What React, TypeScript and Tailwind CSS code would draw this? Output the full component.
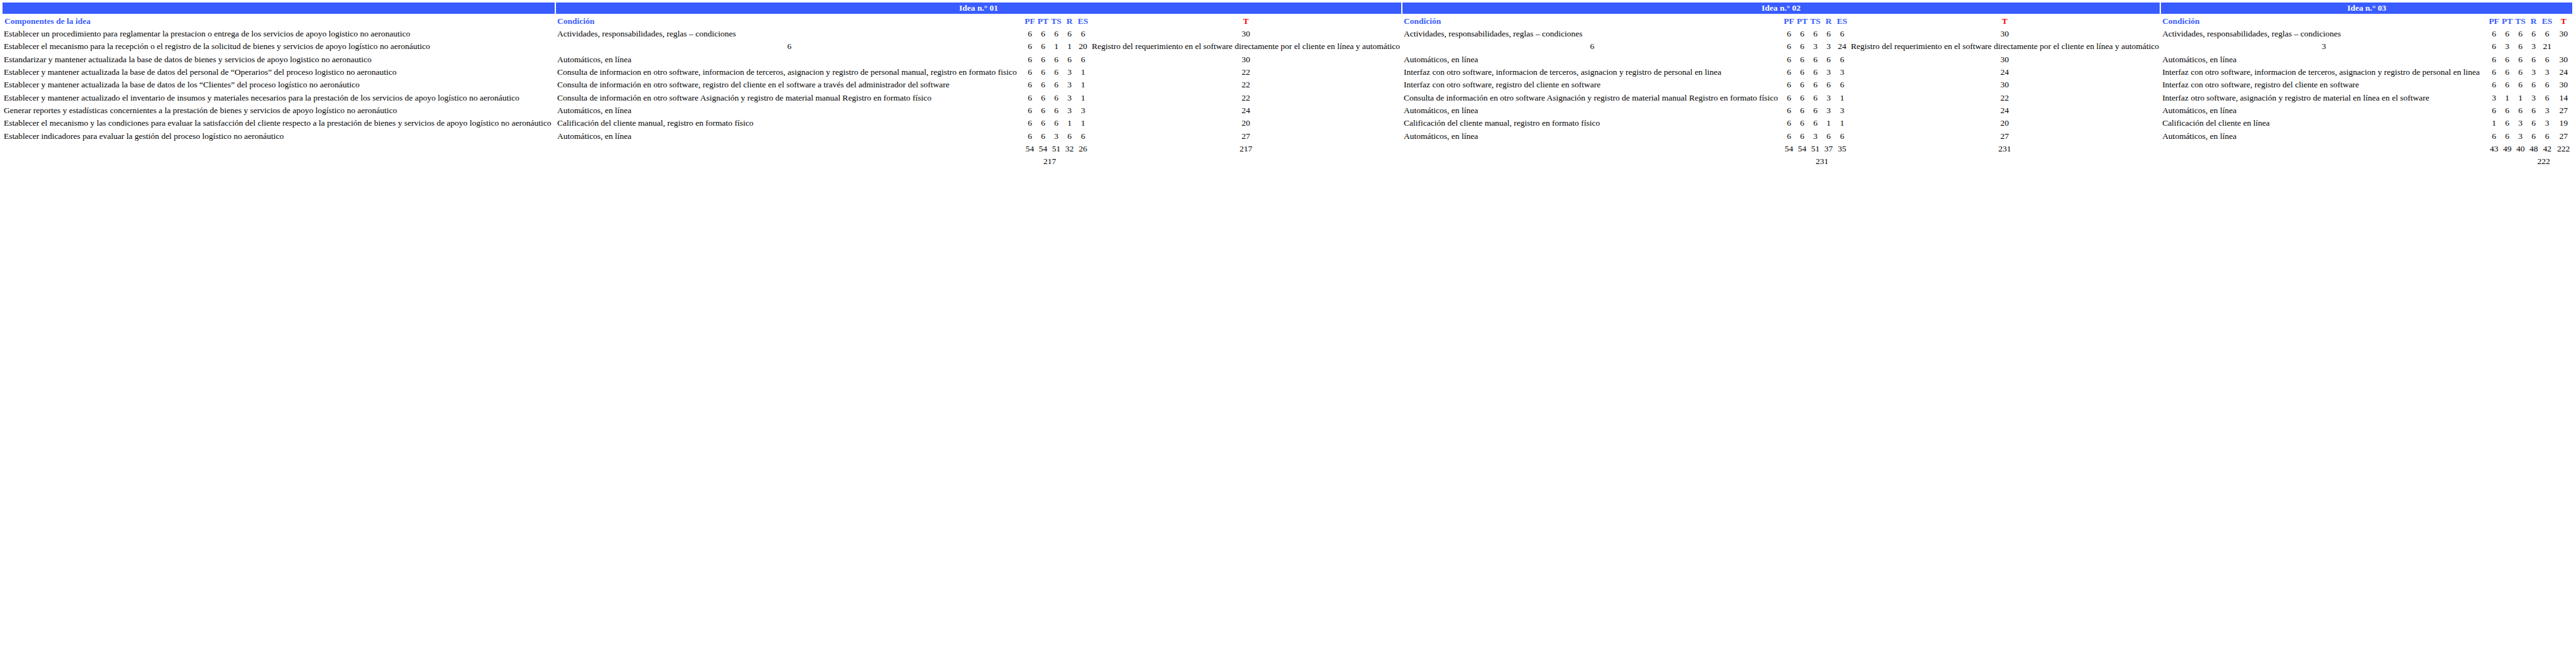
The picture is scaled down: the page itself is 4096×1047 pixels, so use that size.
import React from "react";

type IdeaRow = {
  cond: string;
  nums: string[];
  t: string;
  condCenter?: boolean;
  tText?: boolean;
};

type Idea = {
  title: string;
  rows: IdeaRow[];
  totals: string[];
  total: string;
  grand: string;
  grandStart: number;
};

const components = [
  "Establecer un procedimiento para reglamentar la prestacion o entrega de los servicios de apoyo logistico no aeronautico",
  "Establecer el mecanismo para la recepción o el registro de la solicitud de bienes y servicios de apoyo logístico no aeronáutico",
  "Estandarizar y mantener actualizada la base de datos de bienes y servicios de apoyo logistico no aeronautico",
  "Establecer y mantener actualizada la base de datos del personal de “Operarios” del proceso logistico no aeronautico",
  "Establecer y mantener actualizada la base de datos de los “Clientes” del proceso logístico no aeronáutico",
  "Establecer y mantener actualizado el inventario de insumos y materiales necesarios para la prestación de los servicios de apoyo logístico no aeronáutico",
  "Generar reportes y estadísticas concernientes a la prestación de bienes y servicios de apoyo logístico no aeronáutico",
  "Establecer el mecanismo y las condiciones para evaluar la satisfacción del cliente respecto a la prestación de bienes y servicios de apoyo logístico no aeronáutico",
  "Establecer indicadores para evaluar la gestión del proceso logístico no aeronáutico",
];

const REG =
  "Registro del requerimiento en el software directamente por el cliente en línea y automático";

const ideas: Idea[] = [
  {
    title: "Idea n.° 01",
    rows: [
      { cond: "Actividades, responsabilidades, reglas – condiciones", nums: ["6", "6", "6", "6", "6"], t: "30" },
      { cond: "6", nums: ["6", "6", "1", "1", "20"], t: REG, condCenter: true, tText: true },
      { cond: "Automáticos, en línea", nums: ["6", "6", "6", "6", "6"], t: "30" },
      {
        cond: "Consulta de informacion en otro software, informacion de terceros, asignacion y registro de personal manual, registro en formato fisico",
        nums: ["6", "6", "6", "3", "1"],
        t: "22",
      },
      {
        cond: "Consulta de información en otro software, registro del cliente en el software a través del administrador del software",
        nums: ["6", "6", "6", "3", "1"],
        t: "22",
      },
      {
        cond: "Consulta de información en otro software Asignación y registro de material manual Registro en formato físico",
        nums: ["6", "6", "6", "3", "1"],
        t: "22",
      },
      { cond: "Automáticos, en línea", nums: ["6", "6", "6", "3", "3"], t: "24" },
      { cond: "Calificación del cliente manual, registro en formato físico", nums: ["6", "6", "6", "1", "1"], t: "20" },
      { cond: "Automáticos, en línea", nums: ["6", "6", "3", "6", "6"], t: "27" },
    ],
    totals: ["54", "54", "51", "32", "26"],
    total: "217",
    grand: "217",
    grandStart: 1,
  },
  {
    title: "Idea n.° 02",
    rows: [
      { cond: "Actividades, responsabilidades, reglas – condiciones", nums: ["6", "6", "6", "6", "6"], t: "30" },
      { cond: "6", nums: ["6", "6", "3", "3", "24"], t: REG, condCenter: true, tText: true },
      { cond: "Automáticos, en línea", nums: ["6", "6", "6", "6", "6"], t: "30" },
      {
        cond: "Interfaz con otro software, informacion de terceros, asignacion y registro de personal en linea",
        nums: ["6", "6", "6", "3", "3"],
        t: "24",
      },
      { cond: "Interfaz con otro software, registro del cliente en software", nums: ["6", "6", "6", "6", "6"], t: "30" },
      {
        cond: "Consulta de información en otro software Asignación y registro de material manual Registro en formato físico",
        nums: ["6", "6", "6", "3", "1"],
        t: "22",
      },
      { cond: "Automáticos, en línea", nums: ["6", "6", "6", "3", "3"], t: "24" },
      { cond: "Calificación del cliente manual, registro en formato físico", nums: ["6", "6", "6", "1", "1"], t: "20" },
      { cond: "Automáticos, en línea", nums: ["6", "6", "3", "6", "6"], t: "27" },
    ],
    totals: ["54", "54", "51", "37", "35"],
    total: "231",
    grand: "231",
    grandStart: 2,
  },
  {
    title: "Idea n.° 03",
    rows: [
      { cond: "Actividades, responsabilidades, reglas – condiciones", nums: ["6", "6", "6", "6", "6"], t: "30" },
      { cond: "3", nums: ["6", "3", "6", "3", "21"], t: "", condCenter: true },
      { cond: "Automáticos, en línea", nums: ["6", "6", "6", "6", "6"], t: "30" },
      {
        cond: "Interfaz con otro software, informacion de terceros, asignacion y registro de personal en linea",
        nums: ["6", "6", "6", "3", "3"],
        t: "24",
      },
      { cond: "Interfaz con otro software, registro del cliente en software", nums: ["6", "6", "6", "6", "6"], t: "30" },
      {
        cond: "Interfaz otro software, asignación y registro de material en línea en el software",
        nums: ["3", "1", "1", "3", "6"],
        t: "14",
      },
      { cond: "Automáticos, en línea", nums: ["6", "6", "6", "6", "3"], t: "27" },
      { cond: "Calificación del cliente en línea", nums: ["1", "6", "3", "6", "3"], t: "19" },
      { cond: "Automáticos, en línea", nums: ["6", "6", "3", "6", "6"], t: "27" },
    ],
    totals: ["43", "49", "40", "48", "42"],
    total: "222",
    grand: "222",
    grandStart: 3,
  },
];

const numHeads = ["PF", "PT", "TS", "R", "ES"];

function IdeaCells({ row }: { row: IdeaRow }) {
  return (
    <>
      <td className={row.condCenter ? "p-0 h-[18.35px] text-center whitespace-nowrap" : "p-0 pl-[2px] h-[18.35px] text-left whitespace-nowrap"}>
        {row.cond}
      </td>
      {row.nums.map((n, i) => (
        <td key={i} className="p-0 h-[18.35px] text-center whitespace-nowrap">
          {n}
        </td>
      ))}
      <td className={row.tText ? "p-0 pl-[2px] h-[18.35px] text-left whitespace-nowrap" : "p-0 h-[18.35px] text-center whitespace-nowrap"}>
        {row.t}
      </td>
    </>
  );
}

export default function App() {
  return (
    <div className="min-h-screen bg-white p-[2px] font-['Liberation_Serif',serif] text-[13.5px] leading-[18px] text-black">
      <table className="table-fixed border-separate border-spacing-[2px] w-[4090px]">
        <colgroup>
          <col className="w-[878px]" />
          <col className="w-[742px]" />
          <col className="w-[19px]" />
          <col className="w-[19px]" />
          <col className="w-[19px]" />
          <col className="w-[19px]" />
          <col className="w-[20px]" />
          <col className="w-[494px]" />
          <col className="w-[603px]" />
          <col className="w-[19px]" />
          <col className="w-[19px]" />
          <col className="w-[19px]" />
          <col className="w-[19px]" />
          <col className="w-[20px]" />
          <col className="w-[493px]" />
          <col className="w-[518px]" />
          <col className="w-[19px]" />
          <col className="w-[19px]" />
          <col className="w-[19px]" />
          <col className="w-[19px]" />
          <col className="w-[20px]" />
          <col className="w-[28px]" />
        </colgroup>
        <thead>
          <tr>
            <th className="p-0 h-[18.35px] bg-[#385cff]" />
            {ideas.map((idea) => (
              <th
                key={idea.title}
                colSpan={7}
                className="p-0 h-[18.35px] bg-[#385cff] text-center font-bold text-white whitespace-nowrap"
              >
                {idea.title}
              </th>
            ))}
          </tr>
          <tr>
            <th className="p-0 pl-[3px] h-[18.35px] text-left font-bold text-[#385cff] whitespace-nowrap">
              Componentes de la idea
            </th>
            {ideas.map((idea) => (
              <React.Fragment key={idea.title}>
                <th className="p-0 pl-[2px] h-[18.35px] text-left font-bold text-[#385cff] whitespace-nowrap">
                  Condición
                </th>
                {numHeads.map((h) => (
                  <th key={h} className="p-0 h-[18.35px] text-center font-bold text-[#385cff] whitespace-nowrap">
                    {h}
                  </th>
                ))}
                <th className="p-0 h-[18.35px] text-center font-bold text-[#ff0000] whitespace-nowrap">T</th>
              </React.Fragment>
            ))}
          </tr>
        </thead>
        <tbody className="font-normal">
          {components.map((c, r) => (
            <tr key={r}>
              <td className="p-0 pl-[2px] h-[18.35px] text-left whitespace-nowrap">{c}</td>
              {ideas.map((idea) => (
                <IdeaCells key={idea.title} row={idea.rows[r]} />
              ))}
            </tr>
          ))}
          <tr>
            <td className="p-0 h-[18.35px]" />
            {ideas.map((idea) => (
              <React.Fragment key={idea.title}>
                <td className="p-0 h-[18.35px]" />
                {idea.totals.map((n, i) => (
                  <td key={i} className="p-0 h-[18.35px] text-center whitespace-nowrap">
                    {n}
                  </td>
                ))}
                <td className="p-0 h-[18.35px] text-center whitespace-nowrap">{idea.total}</td>
              </React.Fragment>
            ))}
          </tr>
          <tr>
            <td className="p-0 h-[18.35px]" />
            {ideas.map((idea) => (
              <React.Fragment key={idea.title}>
                <td className="p-0 h-[18.35px]" />
                {[0, 1, 2, 3, 4].map((i) => {
                  if (i === idea.grandStart + 1) return null;
                  if (i === idea.grandStart)
                    return (
                      <td
                        key={i}
                        colSpan={2}
                        className={
                          idea.grandStart === 3
                            ? "p-0 pl-[10px] h-[18.35px] text-center whitespace-nowrap"
                            : "p-0 h-[18.35px] text-center whitespace-nowrap"
                        }
                      >
                        {idea.grand}
                      </td>
                    );
                  return <td key={i} className="p-0 h-[18.35px]" />;
                })}
                <td className="p-0 h-[18.35px]" />
              </React.Fragment>
            ))}
          </tr>
        </tbody>
      </table>
    </div>
  );
}
